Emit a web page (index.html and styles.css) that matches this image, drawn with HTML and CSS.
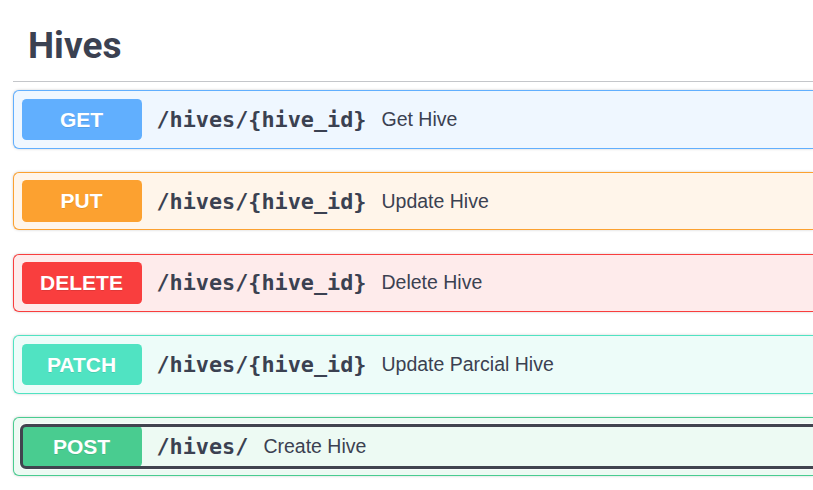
FILE: index.html
```html
<!DOCTYPE html>
<html>
<head>
<meta charset="utf-8">
<title>Hives</title>
<link rel="stylesheet" href="styles.css">
</head>
<body>
<div class="tag-section">
  <h3 class="opblock-tag">Hives</h3>
  <div class="opblock opblock-get">
    <div class="summary">
      <div class="control">
        <span class="method">GET</span>
        <span class="path">/hives/{hive_id}</span>
        <span class="desc">Get Hive</span>
      </div>
    </div>
  </div>
  <div class="opblock opblock-put">
    <div class="summary">
      <div class="control">
        <span class="method">PUT</span>
        <span class="path">/hives/{hive_id}</span>
        <span class="desc">Update Hive</span>
      </div>
    </div>
  </div>
  <div class="opblock opblock-delete">
    <div class="summary">
      <div class="control">
        <span class="method">DELETE</span>
        <span class="path">/hives/{hive_id}</span>
        <span class="desc">Delete Hive</span>
      </div>
    </div>
  </div>
  <div class="opblock opblock-patch">
    <div class="summary">
      <div class="control">
        <span class="method">PATCH</span>
        <span class="path">/hives/{hive_id}</span>
        <span class="desc">Update Parcial Hive</span>
      </div>
    </div>
  </div>
  <div class="opblock opblock-post">
    <div class="summary">
      <div class="control focused">
        <span class="method">POST</span>
        <span class="path">/hives/</span>
        <span class="desc">Create Hive</span>
      </div>
    </div>
  </div>
</div>
</body>
</html>
```
FILE: styles.css
```css
html, body {
  margin: 0;
  padding: 0;
  background: #ffffff;
  overflow: hidden;
}

body {
  width: 813px;
  height: 490px;
  font-family: "Liberation Sans", Arial, sans-serif;
  color: #3b4151;
}

.tag-section {
  margin-left: 13px;
  width: 800px;
}

.opblock-tag {
  margin: 0 0 8px 0;
  padding: 24.5px 30px 14.5px 15px;
  font-family: Roboto, "Liberation Sans", sans-serif;
  font-size: 37px;
  font-weight: 700;
  line-height: 42px;
  color: #3b4151;
  border-bottom: 1px solid rgba(59, 65, 81, 0.3);
}

.opblock {
  border: 1px solid;
  border-right: 0;
  border-radius: 6px 0 0 6px;
  margin: 0 0 23.3px 0;
  box-shadow: 0 0 3px rgba(0, 0, 0, 0.19);
  overflow: hidden;
}

.summary {
  padding: 7.5px 0 7.5px 7.5px;
  display: flex;
  align-items: center;
}

.control {
  display: flex;
  align-items: center;
  flex: 1;
  border-radius: 4px;
}

.control.focused {
  margin-right: -20px;
  outline: 3px solid #41444f;
  outline-offset: -1px;
  box-shadow: 0 0 0 3px #f8fdfb;
}

.method {
  display: block;
  width: 120px;
  min-width: 120px;
  padding: 9px 0;
  line-height: 23.5px;
  border-radius: 4.5px;
  text-align: center;
  font-family: "Liberation Sans", Arial, sans-serif;
  font-size: 21px;
  font-weight: 700;
  color: #ffffff;
  text-shadow: 0 1px 0 rgba(0, 0, 0, 0.1);
}

.path {
  padding: 0 15px 0 15px;
  font-family: "DejaVu Sans Mono", "Liberation Mono", monospace;
  font-size: 21.8px;
  font-weight: 700;
  color: #3b4151;
}

.desc {
  font-family: "Liberation Sans", Arial, sans-serif;
  font-size: 19.5px;
  color: #3b4151;
}

.opblock-get { background: #eff7ff; border-color: #61affe; }
.opblock-get .method { background: #61affe; }

.opblock-put { background: #fff5ea; border-color: #fca130; }
.opblock-put .method { background: #fca130; }

.opblock-delete { background: #feebeb; border-color: #f93e3e; }
.opblock-delete .method { background: #f93e3e; }

.opblock-patch { background: #edfcf9; border-color: #50e3c2; }
.opblock-patch .method { background: #50e3c2; }

.opblock-post { background: #edfaf3; border-color: #49cc90; }
.opblock-post .method { background: #49cc90; }
```
